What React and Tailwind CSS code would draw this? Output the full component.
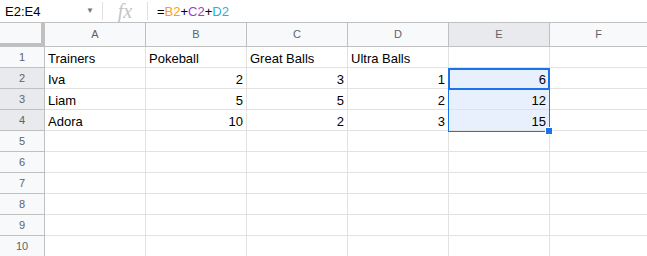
import React from "react";

const cols = ["A", "B", "C", "D", "E", "F"];
const data = [
  ["Trainers", "Pokeball", "Great Balls", "Ultra Balls", "", ""],
  ["Iva", "2", "3", "1", "6", ""],
  ["Liam", "5", "5", "2", "12", ""],
  ["Adora", "10", "2", "3", "15", ""],
  ["", "", "", "", "", ""],
  ["", "", "", "", "", ""],
  ["", "", "", "", "", ""],
  ["", "", "", "", "", ""],
  ["", "", "", "", "", ""],
  ["", "", "", "", "", ""],
];

export default function App() {
  return (
    <div className="w-[647px] h-[256px] overflow-hidden bg-white text-[13px] text-black" style={{ fontFamily: '"Liberation Sans", Arial, sans-serif' }}>
      {/* formula bar */}
      <div className="flex h-[22px] items-center">
        <div className="w-[102px] flex items-center pl-[5px] pr-[8px] h-full">
          <span className="flex-1 leading-none">E2:E4</span>
          <span className="text-[8px] text-[#757575]">▼</span>
        </div>
        <div className="w-px h-[18px] bg-[#e0e0e0]"></div>
        <div className="w-[44px] flex justify-center items-center h-full">
          <span className="italic text-[#c4c4c4] text-[20px] leading-none" style={{ fontFamily: '"Liberation Serif", serif' }}>fx</span>
        </div>
        <div className="w-px h-[18px] bg-[#e0e0e0]"></div>
        <div className="pl-[9px] leading-none">
          <span>=</span>
          <span className="text-[#ff9c1a]">B2</span>
          <span>+</span>
          <span className="text-[#9c3fc4]">C2</span>
          <span>+</span>
          <span className="text-[#1fb3e0]">D2</span>
        </div>
      </div>
      {/* grid */}
      <div className="relative border-t border-[#c0c0c0]">
        <div className="flex h-[24px] bg-[#f8f9fa]">
          <div className="w-[45px] shrink-0 border-r-4 border-b-4 border-[#c0c0c0] bg-[#f8f9fa]"></div>
          {cols.map((c, i) => (
            <div
              key={c}
              className={
                (i === 5 ? "flex-1 " : "w-[101px] shrink-0 border-r ") +
                "border-b border-[#c0c0c0] flex items-center justify-center text-[11px] text-[#5f6368] " +
                (c === "E" ? "bg-[#e8eaed]" : "")
              }
            >
              {c}
            </div>
          ))}
        </div>
        {data.map((row, r) => (
          <div key={r} className="flex h-[21px]">
            <div
              className={
                "w-[45px] shrink-0 border-r border-b border-[#c0c0c0] flex items-center justify-center text-[11px] text-[#5f6368] " +
                (r >= 1 && r <= 3 ? "bg-[#e8eaed]" : "bg-[#f8f9fa]")
              }
            >
              {r + 1}
            </div>
            {row.map((v, i) => {
              const num = v !== "" && !isNaN(Number(v));
              const sel = i === 4 && r >= 1 && r <= 3;
              return (
                <div
                  key={i}
                  className={
                    (i === 5 ? "flex-1 " : "w-[101px] shrink-0 border-r ") +
                    "border-b border-[#e2e2e2] flex items-end pb-[2px] leading-none px-[3px] " +
                    (num ? "justify-end pr-[3px] " : "justify-start ") +
                    (sel ? "bg-[#e8f0fe]" : "")
                  }
                >
                  {v}
                </div>
              );
            })}
          </div>
        ))}
        {/* selection range */}
        <div className="absolute left-[448px] top-[45px] w-[102px] h-[64px] border border-[#1a73e8] pointer-events-none"></div>
        <div className="absolute left-[448px] top-[45px] w-[102px] h-[22px] border-2 border-[#1a73e8] pointer-events-none"></div>
        <div className="absolute left-[545px] top-[104px] w-[8px] h-[8px] bg-[#1a73e8] border border-white"></div>
      </div>
    </div>
  );
}
